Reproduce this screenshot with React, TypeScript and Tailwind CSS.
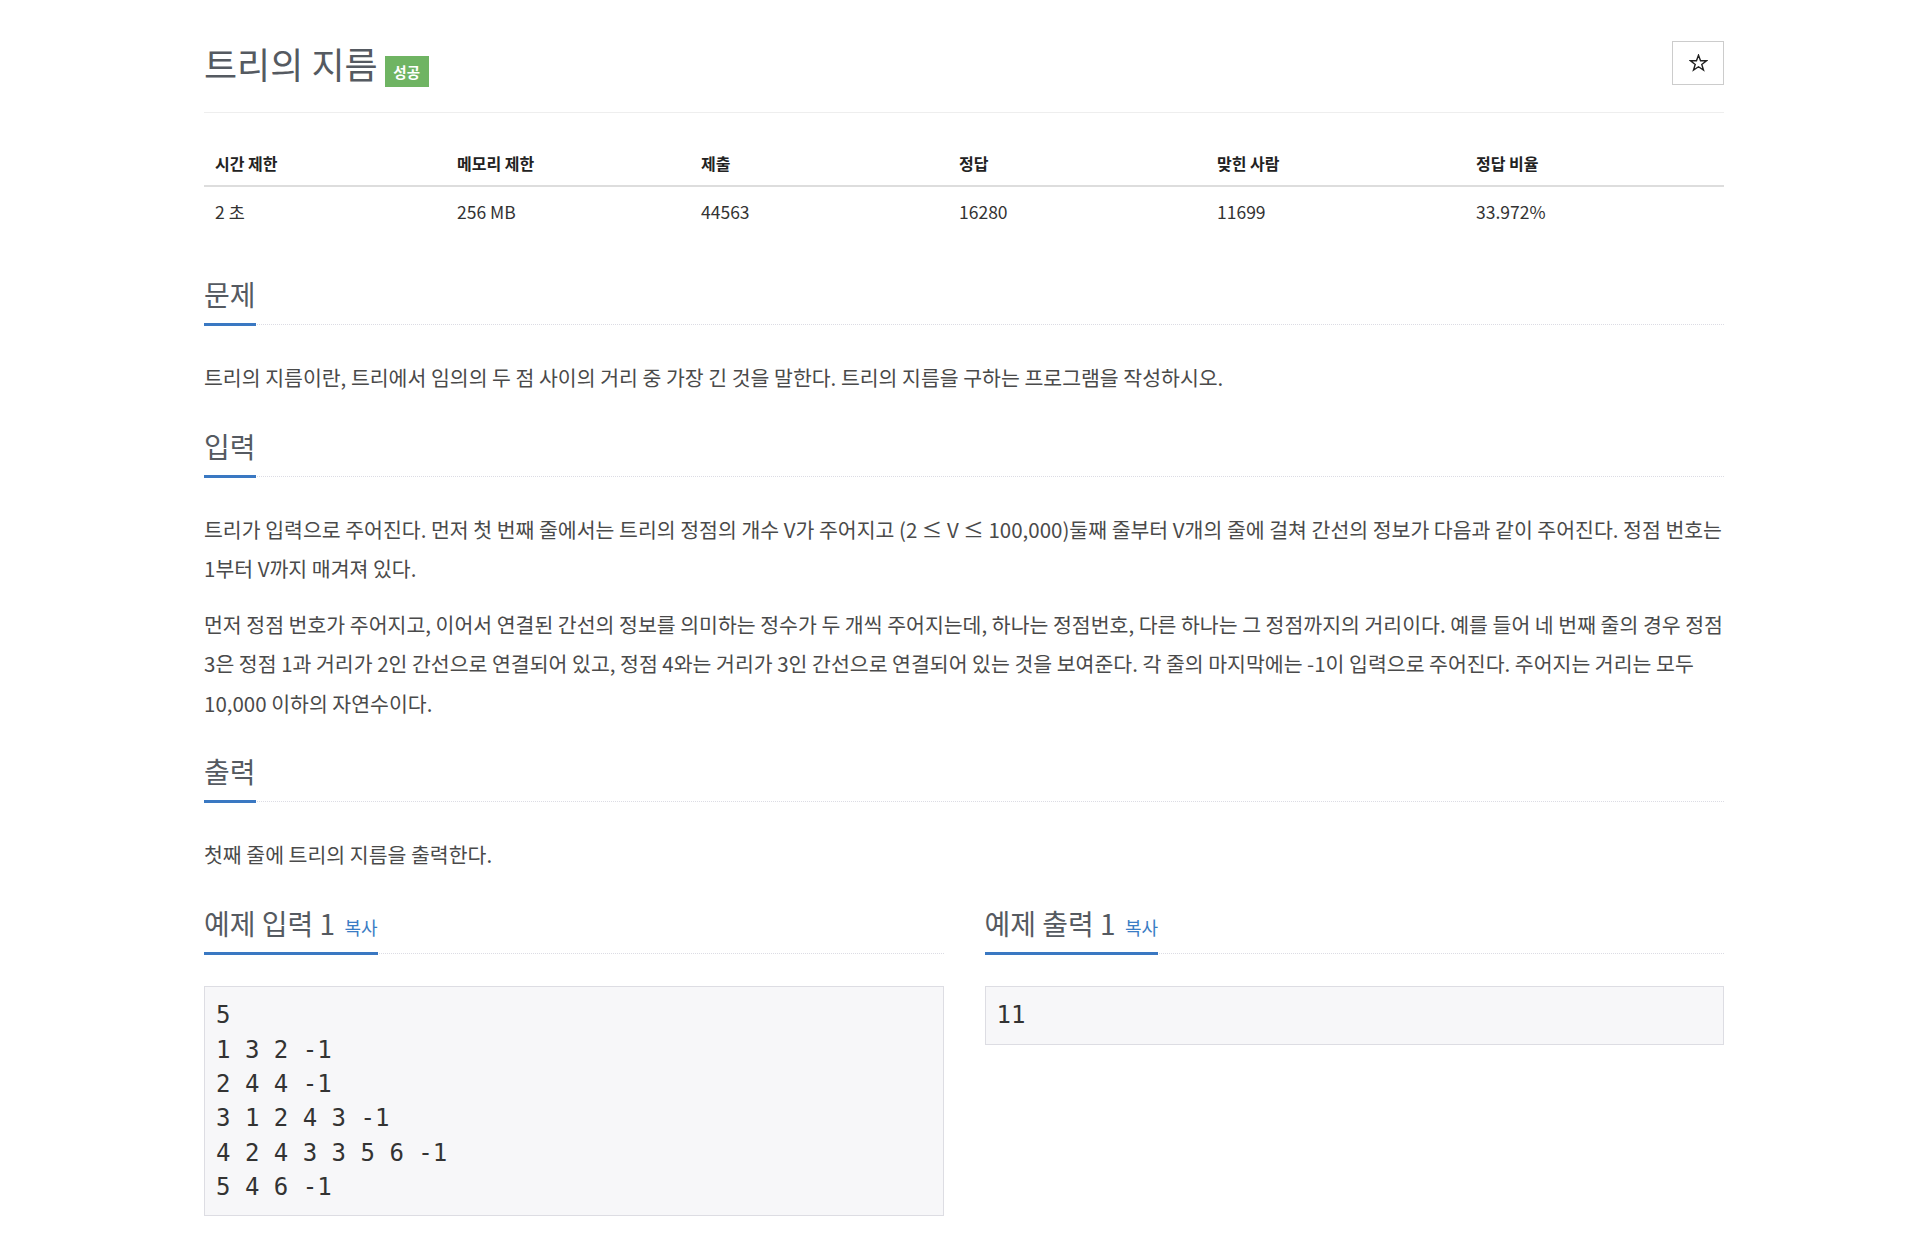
import React from "react";

const FONT = { fontFamily: '"Noto Sans CJK KR", "Noto Sans", sans-serif' };

function Headline({ children }: { children: React.ReactNode }) {
  return (
    <div className="flex border-b border-dotted border-[#dcdce4]">
      <div className="-mb-[2px] border-b-[3px] border-[#3a78c2] pb-[11px] text-[28px] leading-[36px] text-[#555a61]">
        {children}
      </div>
    </div>
  );
}

function StarIcon() {
  return (
    <svg width="19" height="18" viewBox="0 0 24 23" fill="none" stroke="#222" strokeWidth="1.8" strokeLinejoin="miter">
      <polygon points="12,1.5 14.6,8.6 22.2,8.7 16.2,13.3 18.4,20.6 12,16.3 5.6,20.6 7.8,13.3 1.8,8.7 9.4,8.6" />
    </svg>
  );
}

export default function App() {
  const headers = ["시간 제한", "메모리 제한", "제출", "정답", "맞힌 사람", "정답 비율"];
  const values = ["2 초", "256 MB", "44563", "16280", "11699", "33.972%"];
  const widths = ["w-[242px]", "w-[244px]", "w-[258px]", "w-[258px]", "w-[259px]", ""];
  const sample = "5\n1 3 2 -1\n2 4 4 -1\n3 1 2 4 3 -1\n4 2 4 3 3 5 6 -1\n5 4 6 -1";
  return (
    <div className="min-h-screen bg-white" style={FONT}>
      <div className="mx-auto w-[1520px] pt-[41px]">
        <div className="flex items-center justify-between border-b border-[#eeeeee] pb-[27px]">
          <div className="flex items-end gap-[7px]">
            <h1 className="text-[36px] font-normal leading-[44px] text-[#555a61]">트리의 지름</h1>
            <span className="mb-[-2px] flex h-[31px] w-[44px] items-center justify-center bg-[#6fb463] text-[14.5px] font-bold text-white">
              성공
            </span>
          </div>
          <button className="flex h-[44px] w-[52px] items-center justify-center border border-[#cccccc] bg-white">
            <StarIcon />
          </button>
        </div>

        <table className="mt-[27px] w-full table-fixed border-collapse text-[#333]">
          <thead>
            <tr className="border-b-2 border-[#dddddd]">
              {headers.map((h, i) => (
                <th key={h} className={`${widths[i]} h-[46px] px-[11px] text-left text-[16px] font-bold text-[#222]`}>
                  {h}
                </th>
              ))}
            </tr>
          </thead>
          <tbody>
            <tr>
              {values.map((v) => (
                <td key={v} className="h-[46px] px-[11px] pt-[5px] text-left text-[17.5px]">
                  {v}
                </td>
              ))}
            </tr>
          </tbody>
        </table>

        <div className="mt-[44px] flex flex-col gap-[30.5px] text-[20.5px] leading-[39.4px] text-[#4a4a4a]">
          <section className="flex flex-col gap-[33px]">
            <Headline>문제</Headline>
            <p>트리의 지름이란, 트리에서 임의의 두 점 사이의 거리 중 가장 긴 것을 말한다. 트리의 지름을 구하는 프로그램을 작성하시오.</p>
          </section>

          <section className="flex flex-col gap-[33px]">
            <Headline>입력</Headline>
            <div className="flex flex-col gap-[16px]">
              <p>
                트리가 입력으로 주어진다. 먼저 첫 번째 줄에서는 트리의 정점의 개수 V가 주어지고 (2 ≤ V ≤ 100,000)둘째 줄부터 V개의 줄에 걸쳐 간선의 정보가 다음과 같이 주어진다. 정점 번호는 1부터 V까지 매겨져 있다.
              </p>
              <p>
                먼저 정점 번호가 주어지고, 이어서 연결된 간선의 정보를 의미하는 정수가 두 개씩 주어지는데, 하나는 정점번호, 다른 하나는 그 정점까지의 거리이다. 예를 들어 네 번째 줄의 경우 정점 3은 정점 1과 거리가 2인 간선으로 연결되어 있고, 정점 4와는 거리가 3인 간선으로 연결되어 있는 것을 보여준다. 각 줄의 마지막에는 -1이 입력으로 주어진다. 주어지는 거리는 모두 10,000 이하의 자연수이다.
              </p>
            </div>
          </section>

          <section className="flex flex-col gap-[33px]">
            <Headline>출력</Headline>
            <p>첫째 줄에 트리의 지름을 출력한다.</p>
          </section>

          <div className="grid grid-cols-2 gap-[41px]">
            <section className="flex flex-col gap-[32px]">
              <Headline>
                예제 입력 1 <span className="ml-[3px] text-[18px] leading-none text-[#3a7cc4]">복사</span>
              </Headline>
              <pre
                className="border border-[#dddde3] bg-[#f7f7f9] px-[11px] py-[11px] text-[24px] leading-[34.3px] text-[#333]"
                style={{ fontFamily: '"DejaVu Sans Mono", monospace' }}
              >
                {sample}
              </pre>
            </section>
            <section className="flex flex-col gap-[32px]">
              <Headline>
                예제 출력 1 <span className="ml-[3px] text-[18px] leading-none text-[#3a7cc4]">복사</span>
              </Headline>
              <pre
                className="border border-[#dddde3] bg-[#f7f7f9] px-[11px] py-[11px] text-[24px] leading-[34.3px] text-[#333]"
                style={{ fontFamily: '"DejaVu Sans Mono", monospace' }}
              >
                11
              </pre>
            </section>
          </div>
        </div>
      </div>
    </div>
  );
}
